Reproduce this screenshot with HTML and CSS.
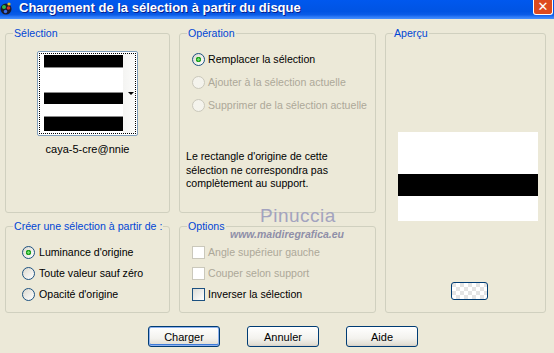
FILE: index.html
```html
<!DOCTYPE html>
<html lang="fr">
<head>
    <meta charset="UTF-8">
    <title>Chargement de la sélection à partir du disque</title>
    <link rel="stylesheet" href="styles.css">
</head>
<body>
    <div class="titlebar">
        <svg class="app-icon" width="13" height="14" viewBox="0 0 13 14">
            <circle cx="6" cy="8" r="5.5" fill="#1a1a2a"/>
            <circle cx="4" cy="6" r="2" fill="#2fb84a"/>
            <circle cx="8.5" cy="7" r="1.8" fill="#d8342b"/>
            <circle cx="5.5" cy="10.5" r="1.7" fill="#3a6ee8"/>
            <circle cx="9" cy="3" r="1.6" fill="#f0c020"/>
        </svg>
        <span class="title">Chargement de la sélection à partir du disque</span>
        <span class="close">✕</span>
    </div>

    <div class="dialog">
        <fieldset class="group sel">
            <legend>Sélection</legend>
            <div class="thumb">
                <div class="thumb-inner">
                    <div class="thumb-img">
                        <div class="bar bar-1"></div>
                        <div class="bar bar-2"></div>
                        <div class="bar bar-3"></div>
                    </div>
                    <div class="thumb-scroll"><span class="arrow"></span></div>
                </div>
            </div>
            <div class="caption">caya-5-cre@nnie</div>
        </fieldset>

        <fieldset class="group op">
            <legend>Opération</legend>
            <div class="opt-list">
                <label class="opt"><span class="radio checked"></span>Remplacer la sélection</label>
                <label class="opt disabled"><span class="radio"></span>Ajouter à la sélection actuelle</label>
                <label class="opt disabled"><span class="radio"></span>Supprimer de la sélection actuelle</label>
            </div>
            <p class="note">Le rectangle d'origine de cette<br>sélection ne correspondra pas<br>complètement au support.</p>
        </fieldset>

        <fieldset class="group apercu">
            <legend>Aperçu</legend>
            <div class="preview"><div class="preview-bar"></div></div>
            <div class="mini-btn"></div>
        </fieldset>

        <fieldset class="group source">
            <legend>Créer une sélection à partir de :</legend>
            <div class="opt-list tight">
                <label class="opt"><span class="radio checked"></span>Luminance d'origine</label>
                <label class="opt"><span class="radio"></span>Toute valeur sauf zéro</label>
                <label class="opt"><span class="radio"></span>Opacité d'origine</label>
            </div>
        </fieldset>

        <fieldset class="group options">
            <legend>Options</legend>
            <div class="opt-list tight">
                <label class="opt disabled"><span class="check"></span>Angle supérieur gauche</label>
                <label class="opt disabled"><span class="check"></span>Couper selon support</label>
                <label class="opt"><span class="check"></span>Inverser la sélection</label>
            </div>
        </fieldset>
    </div>

    <div class="buttons">
        <button class="btn default">Charger</button>
        <button class="btn">Annuler</button>
        <button class="btn">Aide</button>
    </div>

    <div class="watermark">
        <div class="wm-name">Pinuccia</div>
        <div class="wm-url">www.maidiregrafica.eu</div>
    </div>
</body>
</html>
```

FILE: styles.css
```css
/* General Styles */
body {
    margin: 0;
    width: 554px;
    height: 353px;
    overflow: hidden;
    position: relative;
    background: #ECE9D8;
    font-family: "Liberation Sans", Arial, sans-serif;
    font-size: 10.6px;
    color: #000;
}

/* Title bar */
.titlebar {
    position: relative;
    height: 19px;
    display: flex;
    align-items: flex-start;
    background: linear-gradient(to bottom, #0058ee 0%, #0054e3 60%, #0a5ce8 78%, #2a78f6 88%, #4590ff 100%);
}

.app-icon {
    flex: none;
    margin-top: 1px;
}

.title {
    flex: none;
    margin-left: 6px;
    color: #fff;
    font-family: "Liberation Sans", Arial, sans-serif;
    font-weight: bold;
    font-size: 13px;
    line-height: 15px;
    text-shadow: 1px 1px 0 #0a1e8a;
}

/* close button sits over the right end of the title bar */
.close {
    position: absolute;
    top: 0;
    right: 1px;
    width: 20px;
    height: 15px;
    box-sizing: border-box;
    border: 1px solid #fff;
    border-top: 0;
    border-radius: 0 0 3px 3px;
    background-color: #dd4a1f;
    color: #fff;
    font-family: "DejaVu Sans", sans-serif;
    font-size: 13px;
    font-weight: bold;
    line-height: 14px;
    text-align: center;
}

/* Dialog layout */
.dialog {
    display: grid;
    grid-template-columns: 165px 197px 161px;
    grid-template-rows: 186px 93px;
    column-gap: 9px;
    row-gap: 7px;
    padding: 8px 0 0 5px;
}

.group {
    margin: 0;
    padding: 0;
    min-width: 0;
    border: 1px solid #d0d0bf;
    border-radius: 3px;
}

.group legend {
    margin-left: 7px;
    padding: 0 1px;
    color: #0046d5;
    line-height: 13px;
    white-space: nowrap;
}

.sel { grid-column: 1; grid-row: 1; }
.op { grid-column: 2; grid-row: 1; }
.apercu { grid-column: 3; grid-row: 1 / 3; }
.source { grid-column: 1; grid-row: 2; }
.options { grid-column: 2; grid-row: 2; }

/* Selection thumbnail */
.thumb {
    width: 101px;
    height: 85px;
    box-sizing: border-box;
    margin: 11px auto 0;
    padding: 1px;
    border: 1px solid #7f9db9;
    border-radius: 2px;
    background: #fff;
}

.thumb-inner {
    height: 100%;
    box-sizing: border-box;
    border: 1px dotted #000;
    padding-left: 4px;
    display: flex;
}

.thumb-img {
    width: 79px;
}

.bar {
    background: #000;
}

.bar-1 {
    margin-top: 1px;
    height: 12px;
    border-bottom: 1px solid #8a8a8a;
}

.bar-2 {
    margin-top: 24px;
    height: 11px;
    border-top: 1px solid #8a8a8a;
}

.bar-3 {
    margin-top: 12px;
    height: 14px;
    border-top: 1px solid #8a8a8a;
}

.thumb-scroll {
    flex: 1;
    display: flex;
    align-items: center;
    justify-content: flex-end;
    padding-right: 1px;
    background: linear-gradient(to right, #f4f4f2, #fbfbfa);
}

.arrow {
    width: 0;
    height: 0;
    border-left: 3px solid transparent;
    border-right: 3px solid transparent;
    border-top: 3px solid #000;
}

.caption {
    margin-top: 7px;
    text-align: center;
    line-height: 13px;
    font-size: 11px;
}

/* Radios and checkboxes */
.opt-list {
    display: flex;
    flex-direction: column;
    gap: 10px;
    margin-top: 13px;
    padding-left: 12px;
}

.opt-list.tight {
    gap: 8px;
}

.source .opt-list {
    padding-left: 16px;
}

.opt {
    display: flex;
    align-items: center;
    gap: 3px;
    height: 13px;
    line-height: 13px;
    white-space: nowrap;
}

.source .opt {
    gap: 4px;
}

.opt.disabled {
    color: #aca899;
}

.radio {
    width: 13px;
    height: 13px;
    box-sizing: border-box;
    border: 1px solid #1c5180;
    border-radius: 50%;
    background: linear-gradient(135deg, #dcd9ce, #ffffff);
}

.radio.checked {
    background: radial-gradient(circle, #6fe06f 0 1px, #21a121 1.5px 2.5px, transparent 3px),
                linear-gradient(135deg, #dcd9ce, #ffffff);
}

.disabled .radio {
    border-color: #cac8bb;
    background: #f4f3ec;
}

.check {
    width: 13px;
    height: 13px;
    box-sizing: border-box;
    border: 1px solid #1c5180;
    background: linear-gradient(135deg, #dcdcd7, #ffffff);
}

.disabled .check {
    border-color: #cac8bb;
    background: #fff;
}

.note {
    margin: 38px 0 0;
    padding-left: 6px;
    line-height: 13.5px;
}

/* Preview */
.preview {
    width: 140px;
    height: 89px;
    margin: 92px 0 0 12px;
    padding-top: 42px;
    box-sizing: border-box;
    background: #fff;
}

.preview-bar {
    height: 22px;
    background: #000;
}

.mini-btn {
    width: 37px;
    height: 18px;
    box-sizing: border-box;
    margin: 61px 0 0 65px;
    border: 1px solid #003c74;
    border-radius: 3px;
    background: repeating-conic-gradient(#ffffff 0 25%, #e4e4e4 0 50%) 0 0 / 8px 8px;
}

/* Buttons */
.buttons {
    display: flex;
    gap: 27px;
    margin-top: 13px;
    padding-left: 148px;
}

.btn {
    width: 72px;
    height: 21px;
    padding: 0;
    font-family: "Liberation Sans", Arial, sans-serif;
    font-size: 11px;
    color: #000;
    border: 1px solid #003c74;
    border-radius: 3px;
    background: linear-gradient(to bottom, #ffffff 0%, #f3f2ee 60%, #e3e0d6 90%, #d6d0c5 100%);
}

.btn.default {
    box-shadow: inset 0 0 0 1px #8fb2ee, inset 0 -1px 0 1px #3d7bd8;
}

/* Watermark */
.watermark {
    position: absolute;
    left: 230px;
    top: 205px;
    pointer-events: none;
}

.wm-name {
    margin-left: 30px;
    font-family: "Liberation Sans", Arial, sans-serif;
    font-size: 19px;
    letter-spacing: 0.5px;
    line-height: 22px;
    color: #a3a3bf;
}

.wm-url {
    margin-top: 1px;
    font-family: "Liberation Sans", Arial, sans-serif;
    font-size: 10.5px;
    font-weight: bold;
    font-style: italic;
    line-height: 12px;
    color: #8f8fa8;
}
```
